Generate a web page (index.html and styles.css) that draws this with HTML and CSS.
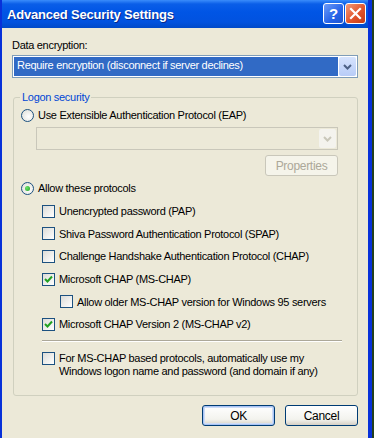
FILE: index.html
```html
<!DOCTYPE html>
<html lang="en">
<head>
  <meta charset="UTF-8">
  <title>Advanced Security Settings</title>
  <link rel="stylesheet" href="styles.css">
</head>
<body>
  <div class="window">
    <div class="titlebar">
      <span class="title">Advanced Security Settings</span>
      <div class="title-buttons">
        <div class="tb-btn help">?</div>
        <div class="tb-btn close">
          <svg width="13" height="13" viewBox="0 0 13 13">
            <path d="M2 2 L11 11 M11 2 L2 11" stroke="#fff" stroke-width="2.2" stroke-linecap="square"/>
          </svg>
        </div>
      </div>
    </div>

    <div class="client">
      <div class="label">Data encryption:</div>
      <div class="combo">
        <div class="combo-value selected">Require encryption (disconnect if server declines)</div>
        <div class="combo-arrow">
          <svg width="9" height="6" viewBox="0 0 9 6"><path d="M1 1 L4.5 4.5 L8 1" fill="none" stroke="#4d6185" stroke-width="2"/></svg>
        </div>
      </div>

      <fieldset class="group">
        <legend>Logon security</legend>

        <div class="row radio-row first">
          <span class="radio"></span>
          <span>Use Extensible Authentication Protocol (EAP)</span>
        </div>

        <div class="combo disabled eap-combo">
          <div class="combo-value"></div>
          <div class="combo-arrow">
            <svg width="9" height="6" viewBox="0 0 9 6"><path d="M1 1 L4.5 4.5 L8 1" fill="none" stroke="#c9c7ba" stroke-width="2"/></svg>
          </div>
        </div>

        <div class="props-line">
          <div class="button disabled">Properties</div>
        </div>

        <div class="row radio-row">
          <span class="radio checked"></span>
          <span>Allow these protocols</span>
        </div>

        <div class="checks">
          <div class="row check-row">
            <span class="checkbox"></span>
            <span>Unencrypted password (PAP)</span>
          </div>
          <div class="row check-row">
            <span class="checkbox"></span>
            <span>Shiva Password Authentication Protocol (SPAP)</span>
          </div>
          <div class="row check-row">
            <span class="checkbox"></span>
            <span>Challenge Handshake Authentication Protocol (CHAP)</span>
          </div>
          <div class="row check-row">
            <span class="checkbox checked"><svg width="9" height="9" viewBox="0 0 9 9"><path d="M1 4 L3.5 6.5 L8 1.5" fill="none" stroke="#21a121" stroke-width="2"/></svg></span>
            <span>Microsoft CHAP (MS-CHAP)</span>
          </div>
          <div class="row check-row sub">
            <span class="checkbox"></span>
            <span>Allow older MS-CHAP version for Windows 95 servers</span>
          </div>
          <div class="row check-row">
            <span class="checkbox checked"><svg width="9" height="9" viewBox="0 0 9 9"><path d="M1 4 L3.5 6.5 L8 1.5" fill="none" stroke="#21a121" stroke-width="2"/></svg></span>
            <span>Microsoft CHAP Version 2 (MS-CHAP v2)</span>
          </div>

          <div class="separator"></div>

          <div class="row check-row multi">
            <span class="checkbox"></span>
            <span>For MS-CHAP based protocols, automatically use my<br>Windows logon name and password (and domain if any)</span>
          </div>
        </div>
      </fieldset>

      <div class="actions">
        <div class="button default">OK</div>
        <div class="button">Cancel</div>
      </div>
    </div>
  </div>
</body>
</html>
```

FILE: styles.css
```css
body {
  margin: 0;
  padding: 0;
  background-color: #23401c;
  font-family: 'Liberation Sans', Arial, sans-serif;
  font-size: 11px;
  letter-spacing: -0.3px;
  color: #000;
}
.window {
  width: 366px;
  height: 438px;
  border-left: 2px solid #0831d9;
  border-right: 4px solid #0831d9;
  background-color: #ece9d8;
  display: flex;
  flex-direction: column;
}
.titlebar {
  height: 28px;
  display: flex;
  align-items: center;
  justify-content: space-between;
  padding: 0 2px 0 5px;
  background: linear-gradient(#3a8cfb 0, #0a5ee8 4px, #0055e5 12px, #0152df 22px, #0049c8 28px);
}
.title {
  color: #fff;
  font-weight: bold;
  font-size: 13px;
  letter-spacing: -0.2px;
  text-shadow: 1px 1px 0 #0a2a8a;
}
.title-buttons {
  display: flex;
  gap: 1px;
  margin-top: -1px;
}
.tb-btn {
  width: 19px;
  height: 19px;
  border: 1px solid #fff;
  border-radius: 3px;
  display: flex;
  align-items: center;
  justify-content: center;
  color: #fff;
  font-weight: bold;
  font-size: 15px;
}
.tb-btn.help {
  background: linear-gradient(135deg, #6d9bf8, #2563e8 60%, #1f55d0);
}
.tb-btn.close {
  background: linear-gradient(135deg, #f29b7b, #e2552d 55%, #c43a15);
}
.client {
  padding: 10px 10px 0 10px;
  display: flex;
  flex-direction: column;
}
.label {
  height: 14px;
  line-height: 14px;
  margin-bottom: 3px;
}
.combo {
  height: 19px;
  border: 1px solid #7f9db9;
  background-color: #fff;
  display: flex;
  align-items: stretch;
  padding: 1px;
}
.combo-value {
  flex: 1;
  line-height: 17px;
  padding-left: 3px;
  margin-right: 1px;
}
.combo-value.selected {
  background-color: #316ac5;
  color: #fff;
}
.combo-arrow {
  width: 17px;
  border-radius: 2px;
  background: linear-gradient(#d6e3fd, #b8ccf7);
  display: flex;
  align-items: center;
  justify-content: center;
}
.combo.disabled {
  border-color: #c9c7ba;
  background-color: #ece9d8;
}
.combo.disabled .combo-arrow {
  background: #f4f3ee;
}
.group {
  margin: 12px 0 0 1px;
  padding: 0 0 10px 0;
  border: 1px solid #d0d0bf;
  border-radius: 3px;
  height: 294px;
}
.group legend {
  color: #0046d5;
  padding: 0 2px;
  margin-left: 6px;
  line-height: 14px;
}
.row {
  display: flex;
  align-items: center;
  gap: 4px;
  height: 16px;
  white-space: nowrap;
}
.radio-row {
  margin-left: 7px;
}
.radio-row.first {
  margin-top: 3px;
}
.radio {
  width: 11px;
  height: 11px;
  border: 1px solid #1c5180;
  border-radius: 50%;
  background: radial-gradient(circle at 60% 60%, #fff, #dcdcd4);
  display: flex;
  align-items: center;
  justify-content: center;
}
.radio.checked::after {
  content: '';
  width: 5px;
  height: 5px;
  border-radius: 50%;
  background: radial-gradient(circle at 35% 35%, #6be36b, #21a121);
}
.eap-combo {
  margin: 4px 19px 0 22px;
}
.props-line {
  display: flex;
  justify-content: flex-end;
  margin: 5px 19px 0 0;
}
.button {
  width: 71px;
  height: 19px;
  border: 1px solid #003c74;
  border-radius: 3px;
  background: linear-gradient(#ffffff, #f3f3ee 70%, #d6d0c5);
  display: flex;
  align-items: center;
  justify-content: center;
  font-size: 12px;
}
.button.disabled {
  border-color: #c9c7ba;
  background: #f5f4ea;
  color: #aca899;
}
.button.default {
  box-shadow: inset 0 0 0 1px #a9c4f5, inset 0 0 0 2px #cedcf6;
}
.props-line + .radio-row {
  margin-top: 4px;
}
.checks {
  margin: 4px 0 0 28px;
  display: flex;
  flex-direction: column;
}
.check-row {
  height: 22.6px;
}
.check-row.sub {
  margin-left: 18px;
}
.checkbox {
  width: 11px;
  height: 11px;
  border: 1px solid #1c5180;
  background: linear-gradient(135deg, #dcdcd7, #fff);
  display: flex;
  align-items: center;
  justify-content: center;
  flex-shrink: 0;
}
.separator {
  height: 0;
  border-top: 1px solid #aca899;
  border-bottom: 1px solid #fff;
  margin: 4px 15px 10px 0;
}
.check-row.multi {
  height: auto;
  align-items: flex-start;
  line-height: 13px;
}
.actions {
  display: flex;
  justify-content: flex-end;
  gap: 10px;
  margin-top: 9px;
}
```
